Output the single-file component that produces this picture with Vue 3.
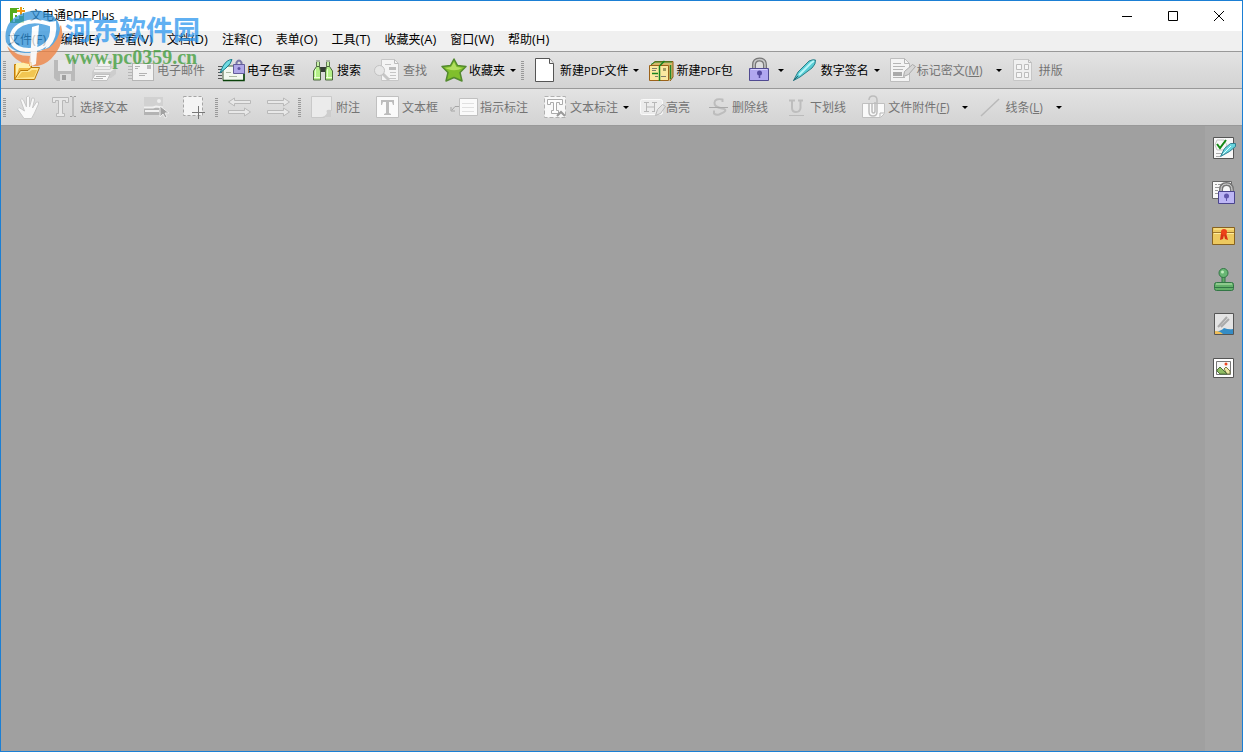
<script setup>
const menus = [
  ['文件', 'F'], ['编辑', 'E'], ['查看', 'V'], ['文档', 'D'], ['注释', 'C'],
  ['表单', 'O'], ['工具', 'T'], ['收藏夹', 'A'], ['窗口', 'W'], ['帮助', 'H'],
]

const mainTools = [
  { grip: true },
  { icon: 'open', title: '打开' },
  { icon: 'save', title: '保存', off: true },
  { icon: 'print', title: '打印', off: true },
  { icon: 'mail', text: '电子邮件', off: true },
  { icon: 'package', text: '电子包裹' },
  { icon: 'search', text: '搜索' },
  { icon: 'find', text: '查找', off: true },
  { icon: 'star', text: '收藏夹', arrow: true },
  { grip: true },
  { icon: 'doc', text: '新建', latin: 'PDF', tail: '文件', arrow: true },
  { icon: 'box', text: '新建', latin: 'PDF', tail: '包' },
  { icon: 'lock', title: '加密', arrow: true },
  { icon: 'pen', text: '数字签名', arrow: true },
  { icon: 'redact', text: '标记密文', key: 'M', off: true, arrow: true },
  { icon: 'grid', text: '拼版', off: true },
]

const noteTools = [
  { grip: true },
  { icon: 'hand', title: '手形', off: true },
  { icon: 'select', text: '选择文本', off: true },
  { icon: 'image', title: '选择图像', off: true },
  { icon: 'crop', title: '快照', off: true },
  { grip: true },
  { icon: 'undo', title: '撤销', off: true },
  { icon: 'redo', title: '重做', off: true },
  { grip: true },
  { icon: 'note', text: '附注', off: true },
  { icon: 'textbox', text: '文本框', off: true },
  { icon: 'callout', text: '指示标注', off: true },
  { icon: 'mark', text: '文本标注', off: true, arrow: true },
  { icon: 'highlight', text: '高亮', off: true },
  { icon: 'strike', text: '删除线', off: true },
  { icon: 'underline', text: '下划线', off: true },
  { icon: 'clip', text: '文件附件', key: 'F', off: true, arrow: true },
  { icon: 'line', text: '线条', key: 'L', off: true, arrow: true },
]

const bars = [
  { name: 'main', label: '主工具栏', tools: mainTools },
  { name: 'notes', label: '注释工具栏', tools: noteTools },
]

const panels = [
  { icon: 'pSign', title: '签名' },
  { icon: 'pLock', title: '安全' },
  { icon: 'pCert', title: '证书' },
  { icon: 'pStamp', title: '图章' },
  { icon: 'pMark', title: '水印' },
  { icon: 'pImage', title: '图像' },
]

const arrowR = (y) => `<path d="M1.500 ${y - 1.5}H17.500V${y - 4}L23.500 ${y}L17.500 ${y + 4}V${y + 1.5}H1.500Z" fill="#e8e8e8" stroke="#b9b9b9"/>`
const arrowL = (y) => `<path d="M23.500 ${y - 1.5}H7.500V${y - 4}L1.500 ${y}L7.500 ${y + 4}V${y + 1.5}H23.500Z" fill="#e8e8e8" stroke="#b9b9b9"/>`

const icons = {
  open: `<path d="M0.500 21.500V6.500H6L8 4.500H17.500V10" fill="#f0b944" stroke="#c07c08"/><path d="M2 5h5l2-1h7v6H5L2 19z" fill="#fff0ac"/><path d="M0.500 21.500L6.500 12.500H14L17 9.500H25.500L20.500 21.500Z" fill="#ffe791" stroke="#b97808"/><path d="M3 20l5-6h7l3-2h5l-3 7z" fill="#f2c652"/>`,
  save: `<path d="M1 2h21v21H4l-3-3z" fill="#bababa"/><path d="M5 2h14v11H5z" fill="#e6e6e6"/><path d="M7 16h11v7H7z" fill="#dcdcdc"/><path d="M9 17h4v5H9z" fill="#a0a0a0"/>`,
  print: `<path d="M5 9L8 1h12l-2 8z" fill="#f2f2f2" stroke="#cacaca"/><path d="M0 14l4-6h16q4 1 4 5v3l-5 4H0z" fill="#cdcdcd"/><path d="M3 10h15M2 13h16l4-3" fill="none" stroke="#ededed" stroke-width="2"/><path d="M3 16.500h15l-3 6H-.5z" fill="#f8f8f8" stroke="#c0c0c0"/><path d="M4 18.500h10M2 20.500h9" stroke="#b0b0b0"/>`,
  mail: `<path d="M-3 8.500h4M-3 11.500h4M-3 14.500h4M-3 17.500h4M-3 20.500h4" stroke="#b5b5b5"/><rect x="1.500" y="5.500" width="21" height="17" fill="#f3f3f3" stroke="#b5b5b5"/><path d="M4 8.500h5M4 10.500h3M8 15.500h8M8 17.500h6" stroke="#b2b2b2"/><path d="M16 7h4v4h-4z" fill="#bbb"/>`,
  package: `<path d="M-3 8.500h4M-3 11.500h4M-3 14.500h4M-3 17.500h4M-3 20.500h4" stroke="#555"/><path d="M2 8h21v14.500H2z" fill="#f2f8ef" stroke="#47613e"/><path d="M2 22.500h21V12" fill="none" stroke="#0a420a" stroke-width="1.500"/><path d="M5 14.500h5M8 18.500h8" stroke="#aab7a1"/><path d="M15.500 7V4.500q2.500-4 5 0V7" fill="none" stroke="#7b78a8" stroke-width="2"/><path d="M12.500 6.500h11v9h-11z" fill="#b0a8e8" stroke="#635c9a"/><circle cx="18" cy="10.500" r="1.500" fill="#5f51a3"/><path d="M-1 15L2 8Q6 1.500 11 1.500Q10 6 5 10Z" fill="#6fdce2" stroke="#187a8a"/>`,
  search: `<path d="M5.500 3.500h3v5h-3zM15.500 3.500h3v5h-3z" fill="#c8f0a8" stroke="#5c7651"/><path d="M5 3h4M15 3h4" stroke="#a9b3a5" stroke-width="2"/><path d="M9 9h6v5H9z" fill="#333b35"/><path d="M5.500 8.500h3L9.500 13v9h-7v-9zM15.500 8.500h3L21.500 13v9h-7v-9z" fill="#b4f088" stroke="#4b663f"/><path d="M4.500 11v9M16.500 11v9" stroke="#e5ffd2"/><path d="M3 19.500h6M15 19.500h6" stroke="#eeffd9"/>`,
  find: `<path d="M4.500 1.500h13l4 4v17h-17z" fill="#f4f4f4" stroke="#c6c6c6"/><path d="M17.500 1.500v4h4" fill="none" stroke="#bbb"/><path d="M8 6.500h6M13 14.500h6M13 17.500h6M10 20.500h9" stroke="#c5c5c5"/><path d="M12 9h7v3h-7z" fill="#bcbcbc"/><path d="M5 15l7 7" stroke="#c6c6c6" stroke-width="3"/><circle cx="2.500" cy="12.500" r="5" fill="#e6e6e6" stroke="#c2c2c2"/>`,
  star: `<path d="M11 1l3.500 6.500 8.500 1-6 6 2 8.500-8-3.500L3 23l2-8.500-6-6 8.500-1z" fill="#80bf2c" stroke="#538a2f" stroke-width="1.500" stroke-linejoin="round"/><path d="M11 4l2.500 5 6 1q-7 4-15 1L2 10l6-1z" fill="#b2df60"/>`,
  doc: `<path d="M1.500 .5h14l4 5v18h-18z" fill="#fff" stroke="#555"/><path d="M15.500 .5v5h4" fill="#eee" stroke="#555"/>`,
  box: `<path d="M0 8l5-4.500h18V19l-3 4" fill="#d5b869" stroke="#8c5912"/><path d="M1 6.500L5 4h17" fill="none" stroke="#238829"/><path d="M20.500 7v14" stroke="#238829" stroke-width="1.500"/><path d="M-.5 7.500h19v15h-19z" fill="#fbe9a0" stroke="#9c621a"/><path d="M2 10.500h5M2 12.500h4M5 18.500h3M11 18.500h5" stroke="#7d7d6a"/><path d="M13 10h3v3h-3z" fill="#a19b63"/><path d="M9.500 8v15M9.500 8l5-5M2 15.500h6" fill="none" stroke="#17831f" stroke-width="1.500"/>`,
  lock: `<path d="M5 11V7Q5 1.500 10.500 1.500T16 7v4" fill="none" stroke="#777" stroke-width="4"/><path d="M5 10V7Q5 1.500 10.500 1.500T16 7v3" fill="none" stroke="#c6c6c6" stroke-width="1.500"/><path d="M.5 10.500h19v12H.5z" fill="#b0a7f0" stroke="#504a91"/><path d="M2 11.500h16" stroke="#d6d0ff"/><circle cx="10.500" cy="15" r="2.500" fill="#554ba0"/><path d="M10.500 16v4" stroke="#554ba0" stroke-width="1.500"/>`,
  pen: `<path d="M-1.500 22.500L3 14 14 3q4-2 6.500-1Q21 6 17 10L5 19Z" fill="#58cdd5" stroke="#2d7f88"/><path d="M4 17L16 5l3-2" fill="none" stroke="#baf6f8" stroke-width="2"/><path d="M-1.500 22.500L3 18" stroke="#276471"/>`,
  redact: `<path d="M-.5 .5h14l5 5v18h-19z" fill="#f4f4f4" stroke="#bdbdbd"/><path d="M13.500 .5v5h5M2 5.500h8M2 8.500h12M2 11.500h10M2 19.500h12" fill="none" stroke="#b5b5b5"/><path d="M2 14h9v4H2z" fill="#aaa"/><path d="M12.500 18.500l1-5 8-7 3 2-7 8z" fill="#d6d6d6" stroke="#aaa"/>`,
  grid: `<path d="M.5 1.500h15l3 3v18H.5z" fill="#f0f0f0" stroke="#c6c6c6"/><path d="M15.500 1.500v3h3" fill="none" stroke="#bbb"/><path d="M3.500 6.500h5v5h-5zM11.500 6.500h4v5h-4zM3.500 14.500h5v5h-5zM11.500 14.500h4v5h-4z" fill="#f6f6f6" stroke="#bdbdbd"/>`,
  hand: `<path d="M9 23.500L2.500 14q1-3 4 0l3 2L5.500 5q1-3 3 0l3 7V2q2-2 3 0v10L17 3q3-1 2.500 2l-2 8 4-6q3-1 2 2l-4 9-3 5.500z" fill="#f9f9f9" stroke="#c8c8c8"/>`,
  select: `<path d="M-1.500 7.500v-5h16v5h-3v-2h-3v13h2v3h-8v-3h2v-13h-3v2z" fill="#e8e8e8" stroke="#b8b8b8"/><path d="M16 1.500h2l1 1 1-1h2M19 2.500v18M16 21.500h2l1-1 1 1h2" fill="none" stroke="#a0a0a0"/>`,
  image: `<path d="M0 2h19v18H0z" fill="#d1d1d1"/><path d="M0 12h19v8H0z" fill="#b3b3b3"/><path d="M0 12.500h9l3-1 7 1M1 16h14" stroke="#f0f0f0" stroke-width="2"/><circle cx="15" cy="6" r="2" fill="#eee"/><path d="M16 11v11l3-3 2 4 2-1-2-4h4z" fill="#a1a1a1" stroke="#eee"/>`,
  crop: `<path d="M.5 1.500h19v19H.5z" fill="#f4f4f4" stroke="#a5a5a5" stroke-dasharray="3 2"/><path d="M9 17.500h13M15.500 11v13" stroke="#777"/>`,
  undo: arrowL(7) + arrowR(17),
  redo: arrowR(7) + arrowR(17),
  note: `<path d="M1.500 1.500h20v14l-7 7h-13z" fill="#ebebeb" stroke="#c9c9c9"/><path d="M21 15q-6-1-4 3-2 4-6 4h10z" fill="#cdcdcd"/>`,
  textbox: `<path d="M.5 1.500h22v21H.5z" fill="#fafafa" stroke="#c0c0c0"/><path d="M5 5h13v5h-1l-1-3h-3v11l2 1v1H8v-1l2-1V7H7l-1 3H5z" fill="#bcbcbc"/>`,
  callout: `<path d="M5.500 3.500h18v17h-18z" fill="#fafafa" stroke="#c0c0c0"/><path d="M8 8.500h12M8 12.500h12M8 16.500h12" stroke="#e0e0e0"/><path d="M5 11.500H1L-2 15M-3 12v4h4" fill="none" stroke="#a5a5a5"/>`,
  mark: `<path d="M.5 1.500h21v21H.5z" fill="#f8f8f8" stroke="#b0b0b0" stroke-dasharray="4 2"/><path d="M3.500 4.500h15v5h-3v-2h-3v8h2v3h-7v-3h2v-8h-3v2h-3z" fill="#fdfdfd" stroke="#aaa"/><path d="M13 21l4-4 4 4" fill="none" stroke="#999" stroke-width="2"/>`,
  highlight: `<rect x=".5" y="4.500" width="22" height="15" rx="2" fill="#ececec" stroke="#fafafa"/><path d="M4 7.500h5M6.500 8v9M4 16.500h5M12 7.500h5M14.500 8v9M12 16.500h3M7 12h7" fill="none" stroke="#b7b7b7"/><path d="M15.500 20.500l2-6 5-5 3 2-5 7z" fill="#e2e2e2" stroke="#b8b8b8"/>`,
  strike: `<path d="M16.500 7V4.500Q9 3 8.500 7.500T16 13.500t-3 6q-3 1-5-1v-3" fill="none" stroke="#bdbdbd" stroke-width="2"/><path d="M3 12.500h19" stroke="#aaa"/>`,
  underline: `<path d="M5 5.500h6M14 5.500h5M8 6v7q0 4 4 4t4.500-4V6" fill="none" stroke="#bdbdbd" stroke-width="2"/><path d="M5 20.500h15" stroke="#bbb"/>`,
  clip: `<path d="M.5 8.500h22v10l-4 4H.5z" fill="#fafafa" stroke="#c0c0c0"/><path d="M22 18h-4v4" fill="none" stroke="#b5b5b5"/><path d="M7 8v9q0 4 4 4t4-4V5q0-4-4-4T7 5M10 8v8q0 2 1.500 2t1.500-2V7" fill="none" stroke="#bcbcbc" stroke-width="1.500"/>`,
  line: `<path d="M2 21L20 4" stroke="#b9b9b9" stroke-width="1.500"/>`,
  pSign: `<path d="M1.500 1.500h20v21h-20z" fill="#f8f8f8" stroke="#555"/><path d="M5 4h7l3 5-3 5H5L3 9z" fill="none" stroke="#c5c5c5"/><path d="M5 8l3 4 6-8" fill="none" stroke="#138713" stroke-width="2"/><path d="M4 17.500h6M4 20.500h4" stroke="#aaa"/><path d="M8.500 20.500l4-8 6-5h5v3l-6 5z" fill="#67d4dd" stroke="#307f91"/><path d="M11 18l8-8" stroke="#d9ffff"/>`,
  pLock: `<path d="M.5 1.500h19v17H.5z" fill="#f8f8f8" stroke="#666"/><path d="M3 4.500h2M6 4.500h7M3 7.500h4M3 10.500h3M3 13.500h3" stroke="#999"/><path d="M9 12V10Q9 4 14.500 4T20 10v3" fill="none" stroke="#777" stroke-width="4"/><path d="M9 12V10Q9 4 14.500 4T20 10v3" fill="none" stroke="#ddd"/><path d="M6.500 11.500h16v12h-16z" fill="#bdb6f5" stroke="#4b458d"/><circle cx="14.500" cy="16" r="2.500" fill="#6257ad"/><path d="M14.500 17v4" stroke="#6257ad"/>`,
  pCert: `<path d="M.5 3.500h22v17H.5z" fill="#edc95f" stroke="#876220"/><path d="M1 8.500h21" stroke="#9d772e"/><path d="M2 5h20M2 9.500h20" stroke="#ffec9e"/><path d="M9 9l-1 7 3-1 1-4 1 4 3 1-2-7z" fill="#d93215"/><circle cx="12" cy="8" r="3" fill="#ed4218"/>`,
  pStamp: `<path d="M10 9h3v7h-3z" fill="#62a86a" stroke="#327645"/><circle cx="11.500" cy="5" r="4.500" fill="#69b774" stroke="#327645"/><circle cx="10.500" cy="4" r="1.500" fill="#c1ecbd"/><rect x="2.500" y="14.500" width="19" height="8" rx="2" fill="#62b069" stroke="#327645"/><path d="M4 16h16" stroke="#b9e4b1"/><path d="M3 19.500h18" stroke="#327645"/>`,
  pMark: `<path d="M2.500 1.500h19v21h-19z" fill="#e4e4e4" stroke="#555"/><path d="M6 15L15 5M9 15l8-8" stroke="#aaa" stroke-width="2"/><path d="M3 20q6-1 9-4 5 2 9 1v5H3z" fill="#348cc5"/><path d="M3 19q5 0 8 3H3z" fill="#f0bd58"/>`,
  pImage: `<path d="M1.500 2.500h20v19h-20z" fill="#fff" stroke="#555"/><path d="M4.500 5.500h14v13h-14z" fill="#f7f7f7" stroke="#777"/><path d="M12 13l2-2 4 4v3h-3z" fill="#ece7a2" stroke="#777a46"/><path d="M5 14l3-3 7 7H8l-3-3z" fill="#8fbc63" stroke="#4f7239"/><circle cx="14" cy="8" r="1.500" fill="#ef431f"/>`,
}
</script>

<template>
  <div class="window">
    <header class="titlebar">
      <svg class="app-icon" viewBox="0 0 16 16" aria-hidden="true">
        <path d="M1 0h14v15H1z" fill="#55ac1c" />
        <path d="M5 14V6h4v4H5" fill="none" stroke="#fff" stroke-width="2" />
        <path d="M12 -1v9M8 3h8" stroke="#fff" stroke-width="4" />
        <path d="M12 -1v8M8 3h8" stroke="#ef9a11" stroke-width="2" />
      </svg>
      <h1>文电通PDF Plus</h1>
      <div class="controls">
        <button type="button" aria-label="最小化"><svg viewBox="0 0 12 12"><path d="M1 6.500h10" /></svg></button>
        <button type="button" aria-label="最大化"><svg viewBox="0 0 12 12"><path d="M1.500 1.500h9v9h-9z" /></svg></button>
        <button type="button" aria-label="关闭"><svg viewBox="0 0 12 12"><path d="M1 1l10 10M11 1L1 11" /></svg></button>
      </div>
    </header>

    <nav class="menubar">
      <button v-for="[name, key] in menus" :key="key" type="button">{{ name }}<span class="accel">({{ key }})</span></button>
    </nav>

    <div v-for="bar in bars" :key="bar.name" class="toolbar" :class="bar.name" role="toolbar" :aria-label="bar.label">
      <template v-for="(t, i) in bar.tools" :key="i">
        <span v-if="t.grip" class="grip"></span>
        <button v-else type="button" class="tool" :class="{ off: t.off, bare: !t.text && !t.arrow, menu: t.arrow, keyed: t.key }" :aria-label="t.title">
          <svg class="icon" viewBox="0 0 24 24" aria-hidden="true" v-html="icons[t.icon]"></svg>
          <span v-if="t.text" class="label">{{ t.text }}<span v-if="t.latin" class="latin">{{ t.latin }}</span>{{ t.tail }}<span v-if="t.key">(<u>{{ t.key }}</u>)</span></span>
          <span v-if="t.arrow" class="arrow"></span>
        </button>
      </template>
    </div>

    <main class="workspace">
      <div class="canvas"></div>
      <aside class="side">
        <button v-for="p in panels" :key="p.icon" type="button" :aria-label="p.title">
          <svg class="icon" viewBox="0 0 24 24" aria-hidden="true" v-html="icons[p.icon]"></svg>
        </button>
      </aside>
    </main>

    <div class="watermark">
      <svg class="wm-logo" viewBox="0 0 58 56" aria-hidden="true">
        <path d="M56 15Q61 34 46 49Q36 58 24 56L26 44Q42 42 48 26Z" fill="#f07f3c" />
        <path d="M2 36Q10 46 25 46L24 54Q8 52 2 36Z" fill="#f07f3c" />
        <path d="M1 32Q-2 13 14 5Q32 -4 47 5Q54 10 55 19Q54 30 44 38L26 43Q8 44 1 32Z" fill="#2f92da" />
        <path d="M7 31Q5 20 17 14Q30 8 47 15Q49 28 40 35Q34 40 24 40Q10 40 7 31Z" fill="#2f92da" stroke="#fff" stroke-width="4" />
        <path d="M27 17l7-2-3 39q-3 2-6 2l1-20Z" fill="#fff" />
        <path d="M45 12l6-1q2 17-7 26l-4 2q6-10 5-27Z" fill="#fff" />
      </svg>
      <div class="wm-text">
        <span class="wm-name">河东软件园</span>
        <span class="wm-url">www.pc0359.cn</span>
      </div>
    </div>
  </div>
</template>

<style>
body {
  margin: 0;
}
</style>

<style scoped>
.window {
  position: relative;
  box-sizing: border-box;
  min-height: 100vh;
  display: flex;
  flex-direction: column;
  border: 1px solid #1b7fd4;
  background: #a0a0a0;
  color: #000;
  font: 12px/16px "Open Sans", "Noto Sans CJK SC", sans-serif;
  overflow: hidden;
}
button {
  margin: 0;
  padding: 0;
  border: 0;
  background: none;
  color: inherit;
  font: inherit;
}
.titlebar {
  display: flex;
  align-items: center;
  height: 30px;
  padding-left: 8px;
  background: #fff;
}
.app-icon {
  width: 16px;
  height: 16px;
  margin-right: 5px;
  overflow: visible;
}
h1 {
  margin: 0;
  font-size: 12px;
  font-weight: 400;
}
.controls {
  display: flex;
  align-self: stretch;
  margin-left: auto;
}
.controls button {
  display: flex;
  align-items: center;
  justify-content: center;
  width: 46px;
}
.controls svg {
  width: 12px;
  height: 12px;
  fill: none;
  stroke: #000;
}
.menubar {
  display: flex;
  align-items: flex-start;
  height: 20px;
  background: #f0f0f0;
  border-bottom: 1px solid #999;
}
.menubar button {
  padding: 0 7px;
  white-space: nowrap;
}
.accel {
  font-size: 13px;
}
.toolbar {
  display: flex;
  align-items: center;
  height: 36px;
  padding-left: 1px;
  background: linear-gradient(#e3e3e3, #d3d3d3);
  border-bottom: 1px solid #999;
}
.grip {
  width: 3px;
  height: 19px;
  margin: 0 1px;
  background: repeating-linear-gradient(#999 0 1px, transparent 1px 2px);
}
.main .grip {
  margin: 0 2px;
}
.main .grip:first-child {
  margin: 0 0 0 1px;
}
.tool {
  display: flex;
  align-items: center;
  height: 32px;
  padding: 0 8px;
  white-space: nowrap;
}
.bare {
  padding-right: 7px;
}
.menu {
  padding-right: 3px;
}
.icon {
  display: block;
  flex: none;
  width: 24px;
  height: 24px;
  overflow: visible;
  fill: none;
}
.label {
  margin-left: 2px;
  padding-top: 2px;
}
.latin {
  font-size: 11px;
}
.off {
  color: #747474;
}
.arrow {
  width: 0;
  margin-left: 5px;
  border: 3px solid transparent;
  border-top-color: #000;
  border-bottom: 0;
}
.keyed .arrow {
  margin-left: 13px;
}
.workspace {
  flex: 1;
  display: flex;
}
.canvas {
  flex: 1;
  background: #a0a0a0;
}
.side {
  display: flex;
  flex-direction: column;
  width: 37px;
  background: #a5a5a5;
}
.side button {
  display: flex;
  align-items: center;
  justify-content: center;
  height: 44px;
}
.watermark {
  position: absolute;
  top: 9px;
  left: 4px;
  display: flex;
  opacity: 0.75;
  pointer-events: none;
}
.wm-logo {
  width: 58px;
  height: 56px;
}
.wm-text {
  display: flex;
  flex-direction: column;
  padding-left: 2px;
}
.wm-name {
  color: #2b96ee;
  font: 700 27px/37px "Noto Sans CJK SC", sans-serif;
}
.wm-url {
  color: #3c9c37;
  font: 700 20px/20px "Liberation Serif", serif;
}
</style>
